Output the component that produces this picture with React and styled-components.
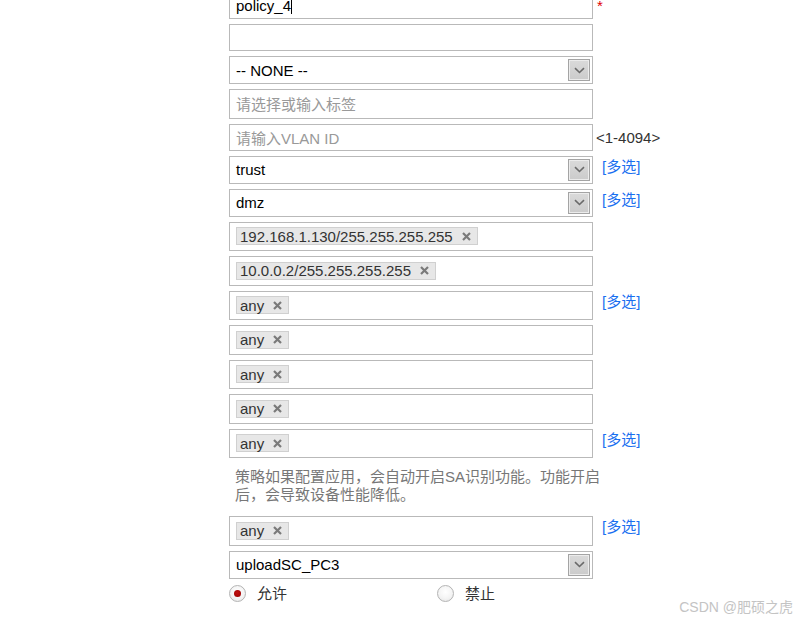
import React from 'react';
import styled, { createGlobalStyle, css } from 'styled-components';

const Global = createGlobalStyle`
  html, body { margin: 0; padding: 0; background: #fff; }
  body {
    font-family: "Liberation Sans", "Noto Sans CJK SC", Arial, sans-serif;
    font-size: 15px;
    color: #000;
    overflow: hidden;
  }
`;

const Page = styled.div`
  position: relative;
  width: 799px;
  height: 623px;
  overflow: hidden;
`;

const Form = styled.div`
  display: flex;
  flex-direction: column;
  gap: 5px;
  margin-left: 229px;
  margin-top: -8px;
`;

const Row = styled.div`
  display: flex;
  align-items: center;
`;

const boxBase = css`
  box-sizing: border-box;
  width: 364px;
  flex: none;
  border: 1px solid #b9b9b9;
  background: #fff;
  display: flex;
  align-items: center;
`;

const TextBox = styled.div`
  ${boxBase};
  height: 27px;
  padding: 0 6px;
  white-space: nowrap;
  color: ${p => (p.$placeholder ? '#999' : '#000')};
`;

const Caret = styled.span`
  display: inline-block;
  width: 1px;
  height: 16px;
  background: #000;
`;

const SelectBox = styled.div`
  ${boxBase};
  height: 28px;
  padding: 0 2px 0 6px;
  justify-content: space-between;
`;

const SelectButton = styled.div`
  box-sizing: border-box;
  width: 22px;
  height: 22px;
  border: 1px solid #a4a4a4;
  box-shadow: inset 0 0 0 1px #ececec;
  background: linear-gradient(#dadada, #cbcbcb);
  display: flex;
  align-items: center;
  justify-content: center;
`;

const TagBox = styled.div`
  ${boxBase};
  height: 29.5px;
  padding: 0 6px;
  gap: 4px;
`;

const Placeholder = styled.span`
  color: #999;
`;

const Chip = styled.span`
  box-sizing: border-box;
  height: 18px;
  display: inline-flex;
  align-items: center;
  gap: 9px;
  padding: 0 6px 0 3px;
  background: #e7e7e7;
  border: 1px solid #d0d0d0;
  color: #333;
  white-space: nowrap;
`;

const Star = styled.span`
  color: #e00000;
  font-size: 15px;
  line-height: 17px;
  margin-left: 4px;
  align-self: flex-start;
  margin-top: 5px;
`;

const Hint = styled.span`
  color: #333;
  margin-left: 3px;
  line-height: 17px;
`;

const MultiLink = styled.a`
  color: #1a6ff0;
  text-decoration: none;
  margin-left: 9px;
  line-height: 17px;
  align-self: flex-start;
  margin-top: 2px;
  white-space: nowrap;
`;

const Note = styled.div`
  box-sizing: border-box;
  width: 376px;
  padding: 5px 0 7px 6px;
  color: #777;
  line-height: 18px;
`;

const RadioRow = styled.div`
  display: flex;
  align-items: center;
  height: 17px;
  margin-top: 1px;
`;

const RadioOption = styled.label`
  display: flex;
  align-items: center;
  gap: 11px;
  width: 208px;
  color: #333;
  line-height: 17px;
`;

const RadioDot = styled.span`
  box-sizing: border-box;
  width: 17px;
  height: 17px;
  border-radius: 50%;
  border: 1px solid #b4b4b4;
  background: radial-gradient(circle at 50% 40%, #ffffff 0%, #f4f4f4 55%, #e2e2e2 100%);
  display: flex;
  align-items: center;
  justify-content: center;
  &::after {
    content: '';
    display: ${p => (p.$checked ? 'block' : 'none')};
    width: 7px;
    height: 7px;
    border-radius: 50%;
    background: radial-gradient(circle at 45% 40%, #c01010 0%, #9a0000 100%);
  }
`;

const Watermark = styled.div`
  position: absolute;
  right: 6px;
  bottom: 7px;
  font-size: 14px;
  color: #c4c4c4;
  font-family: "Liberation Sans", "Noto Sans CJK SC", sans-serif;
`;

const Chevron = () => (
  <svg width="11" height="7" viewBox="0 0 11 7">
    <path d="M1 1.2 L5.5 5.5 L10 1.2" fill="none" stroke="#6a6a6a" strokeWidth="1.6" />
  </svg>
);

const CloseX = () => (
  <svg width="9" height="9" viewBox="0 0 9 9">
    <path d="M1 1 L8 8 M8 1 L1 8" stroke="#7a7a7a" strokeWidth="2.2" />
  </svg>
);

const Select = ({ value }) => (
  <SelectBox>
    <span>{value}</span>
    <SelectButton>
      <Chevron />
    </SelectButton>
  </SelectBox>
);

const Tags = ({ items }) => (
  <TagBox>
    {items.map(t => (
      <Chip key={t}>
        {t}
        <CloseX />
      </Chip>
    ))}
  </TagBox>
);

const Multi = () => <MultiLink href="#">[多选]</MultiLink>;

export default function App() {
  return (
    <Page>
      <Global />
      <Form>
        <Row>
          <TextBox>
            policy_4
            <Caret />
          </TextBox>
          <Star>*</Star>
        </Row>
        <Row>
          <TextBox />
        </Row>
        <Row>
          <Select value="-- NONE --" />
        </Row>
        <Row>
          <TagBox>
            <Placeholder>请选择或输入标签</Placeholder>
          </TagBox>
        </Row>
        <Row>
          <TextBox $placeholder>请输入VLAN ID</TextBox>
          <Hint>&lt;1-4094&gt;</Hint>
        </Row>
        <Row>
          <Select value="trust" />
          <Multi />
        </Row>
        <Row>
          <Select value="dmz" />
          <Multi />
        </Row>
        <Row>
          <Tags items={['192.168.1.130/255.255.255.255']} />
        </Row>
        <Row>
          <Tags items={['10.0.0.2/255.255.255.255']} />
        </Row>
        <Row>
          <Tags items={['any']} />
          <Multi />
        </Row>
        <Row>
          <Tags items={['any']} />
        </Row>
        <Row>
          <Tags items={['any']} />
        </Row>
        <Row>
          <Tags items={['any']} />
        </Row>
        <Row>
          <Tags items={['any']} />
          <Multi />
        </Row>
        <Note>策略如果配置应用，会自动开启SA识别功能。功能开启后，会导致设备性能降低。</Note>
        <Row>
          <Tags items={['any']} />
          <Multi />
        </Row>
        <Row>
          <Select value="uploadSC_PC3" />
        </Row>
        <RadioRow>
          <RadioOption>
            <RadioDot $checked />
            允许
          </RadioOption>
          <RadioOption>
            <RadioDot />
            禁止
          </RadioOption>
        </RadioRow>
      </Form>
      <Watermark>CSDN @肥硕之虎</Watermark>
    </Page>
  );
}
